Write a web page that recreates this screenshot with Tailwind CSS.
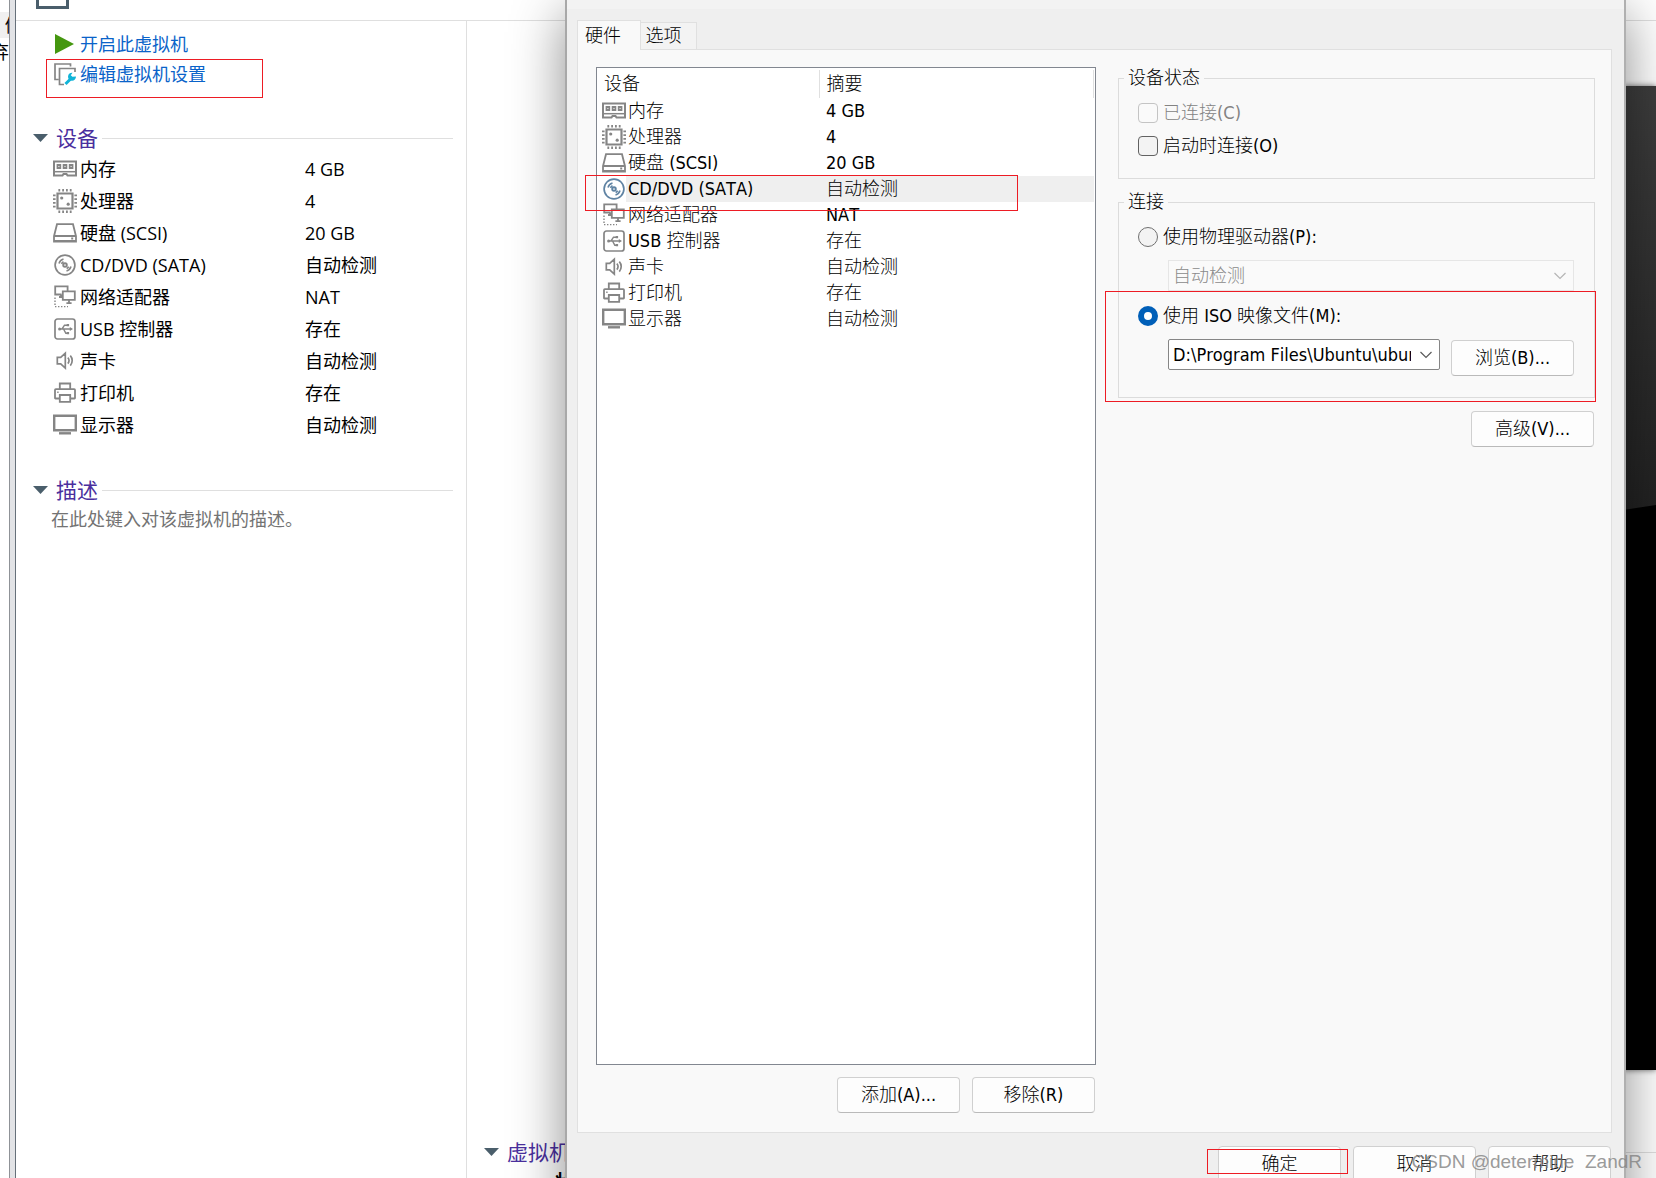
<!DOCTYPE html>
<html lang="zh-CN">
<head>
<meta charset="utf-8">
<title>虚拟机设置</title>
<script src="https://cdn.jsdelivr.net/npm/@tailwindcss/browser@4"></script>
</head>
<body class="bg-white">
<!-- shared device icons -->
<svg class="hidden" aria-hidden="true">
  <symbol id="i-mem" viewBox="0 0 24 24" fill="none" stroke="currentColor">
    <path stroke-width="2" d="M1 4.5h22v14H14.500l-1-1.500h-3l-1 1.500H1z"/><path stroke-width="1.500" d="M1 14.700h22"/><path stroke-width="1.800" d="M4.500 8h2.800v3H4.500zM10.600 8h2.800v3h-2.800zM16.700 8h2.800v3h-2.800z"/>
  </symbol>
  <symbol id="i-cpu" viewBox="0 0 24 24" fill="none" stroke="currentColor">
    <path stroke-width="2.200" d="M4.500 4.500h15v15h-15z"/><path stroke-width="2.600" stroke-dasharray="1.800 2" d="M5.400 1.300h13.500M5.400 22.700h13.500M1.300 5.400v13.500M22.700 5.400v13.500"/><circle cx="8.700" cy="9" r="1.600" fill="currentColor" stroke="none"/><circle cx="15.200" cy="15.200" r="1.600" fill="currentColor" stroke="none"/>
  </symbol>
  <symbol id="i-hdd" viewBox="0 0 24 24" fill="none" stroke="currentColor">
    <path stroke-width="1.800" d="M4 3.200h16l3 12v5.500H1v-5.500zM1 15h22"/><path stroke-width="2" d="M1 20h22M18.200 17.500h2"/>
  </symbol>
  <symbol id="i-cd" viewBox="0 0 24 24" fill="none" stroke="currentColor">
    <circle cx="12" cy="12" r="9.900" stroke-width="1.700"/><circle cx="12" cy="12" r="1.800" stroke-width="1.900"/><path stroke-width="1.600" d="M6 10.500a6.400 6.400 0 0 1 4.500-4.500M8.500 10.800a4 4 0 0 1 2-2M18 13.500a6.400 6.400 0 0 1-4.500 4.500M15.600 13.600a4 4 0 0 1-2 2"/>
  </symbol>
  <symbol id="i-net" viewBox="0 0 24 24" fill="none" stroke="currentColor">
    <path stroke-width="1.800" d="M8.500 9.500H2.200V1.400h12.400v4M9.800 6.400h12v8.400h-12zM16 15v3M13.400 18.200h5.200M6 12h3.500M8 9.500V12"/><path stroke-width="1.400" stroke-dasharray="1.400 1.600" d="M2 12.500v9M2 21.600h13"/>
  </symbol>
  <symbol id="i-usb" viewBox="0 0 24 24" fill="none" stroke="currentColor">
    <rect x="2" y="2" width="20" height="20" rx="2.500" stroke-width="1.700"/><path stroke-width="1.400" d="M6 12h12M9 12l2.500-3.800h3M10.500 12l2.300 4.200h2"/><circle cx="6.600" cy="12" r="1.500" fill="currentColor" stroke="none"/><path fill="currentColor" stroke="none" d="M16.800 10l3.200 2-3.200 2zM13.700 7h2.400v2.300h-2.400zM13.700 15h2.400v2.300h-2.400z"/>
  </symbol>
  <symbol id="i-snd" viewBox="0 0 24 24" fill="none" stroke="currentColor">
    <path stroke-width="1.700" d="M4.300 8.300h3.400l4.600-4.200v15l-4.600-4.200H4.300zM14.800 8.600a4.200 4.200 0 0 1 0 6M17.300 6.600a7.500 7.500 0 0 1 0 10"/>
  </symbol>
  <symbol id="i-prn" viewBox="0 0 24 24" fill="none" stroke="currentColor">
    <path stroke-width="1.800" d="M6.800 8V2.500h10.400V8M6.500 17.500H2.500q-.5 0-.5-.5V9q0-.8.800-.8h18.400q.8 0 .8.800v8q0 .5-.5.500h-4M6.800 14h10.400v6.800H6.800z"/><path stroke-width="1.400" d="M4.200 11.300h1.400"/>
  </symbol>
  <symbol id="i-dsp" viewBox="0 0 24 24" fill="none" stroke="currentColor">
    <path stroke-width="2.400" d="M1.200 2.700h21.600v14.600H1.200z"/><path stroke-width="2.400" d="M6 20.300h12"/>
  </symbol>
</svg>

<div class="relative flex h-screen overflow-hidden bg-white font-['Open_Sans','Noto_Sans_CJK_SC',sans-serif] text-lg text-black [font-kerning:none]">
  <!-- edge of the library pane -->
  <div class="flex w-4 shrink-0">
    <div class="flex w-[9px] flex-col overflow-hidden pt-3">
      <div class="flex h-[26px] justify-end overflow-hidden bg-[#f0f0f0] leading-[26px]"><span class="w-1 shrink-0 overflow-hidden">倒</span></div>
      <div class="flex h-7 justify-end overflow-hidden leading-7"><span>弃</span></div>
    </div>
    <div class="flex-1 border-r border-l border-l-[#8f9297] border-r-[#66707a] bg-[#e2e3e6]"></div>
  </div>

  <div class="flex min-w-0 flex-1 flex-col">
    <header class="flex h-[21px] shrink-0 border-b border-[#dfdfdf] pl-5">
      <div class="h-[9px] w-[33px] border-3 border-t-0 border-[#4a5e6b]"></div>
    </header>
    <div class="flex min-h-0 flex-1">
      <aside class="w-[451px] shrink-0 border-r border-[#dfdfdf] pt-2 pr-[13px]">
        <nav class="flex flex-col items-start pl-[30px] text-[#0a63c9]">
          <a href="#" class="flex h-[30px] items-center gap-[5px] pl-[9px]">
            <svg class="size-5" viewBox="0 0 20 20"><path fill="#45970f" d="M0 0l19 10L0 20z"/></svg>
            <span>开启此虚拟机</span></a>
          <a href="#" class="flex h-[39px] w-[217px] items-start gap-[3px] border border-[#ed1c24] pl-[7px] leading-7">
            <svg class="mt-[3px] size-[23px]" viewBox="0 0 23 23" fill="none"><path stroke="#858585" stroke-width="1.700" d="M4.500 16.500H1V1h15.500v2.500M21 9V5.500H5.500v16H10"/><path stroke="#10b4d8" stroke-width="3" d="M11.500 21l6-6"/><path fill="#10b4d8" d="M22 13.500a4 4 0 1 1-3.500-3.800l-1.700 2.500 1.600 1.600z"/></svg>
            编辑虚拟机设置</a>
        </nav>

        <section class="pt-6">
          <h2 class="flex h-8 items-center pl-[17px] text-[21px] text-[#4a2f9e]">
            <svg class="mr-2 h-2 w-[15px]" viewBox="0 0 15 8"><path fill="#4a5e6b" d="M0 0h15L7.500 8z"/></svg>设备<span class="ml-1 h-px flex-1 bg-[#dfdfdf]"></span></h2>
          <table class="w-full"><tbody id="summary"></tbody></table>
        </section>
        <section class="pt-8">
          <h2 class="flex h-8 items-center pl-[17px] text-[21px] text-[#4a2f9e]">
            <svg class="mr-2 h-2 w-[15px]" viewBox="0 0 15 8"><path fill="#4a5e6b" d="M0 0h15L7.500 8z"/></svg>描述<span class="ml-1 h-px flex-1 bg-[#dfdfdf]"></span></h2>
          <p class="pl-[35px] leading-[26px] text-[#737373]">在此处键入对该虚拟机的描述。</p>
        </section>
      </aside>

      <main class="flex min-w-0 flex-1 flex-col justify-end">
        <section class="h-[43px] shrink-0 overflow-hidden">
          <h2 class="flex h-[34px] items-center pl-[17px] text-[21px] text-[#4a2f9e]">
            <svg class="mr-2 h-2 w-[15px] shrink-0" viewBox="0 0 15 8"><path fill="#4a5e6b" d="M0 0h15L7.500 8z"/></svg>虚拟机详细信息<span class="ml-1 h-px flex-1 bg-[#dfdfdf]"></span></h2>
          <p class="pl-[88px] leading-6 font-bold">状态：</p>
        </section>
      </main>
    </div>
  </div>

  <!-- console preview behind the dialog -->
  <div class="absolute top-[86px] right-0 bottom-[108px] w-[33px] shadow-[0_0_6px_rgba(0,0,0,0.6)]">
    <svg class="size-full" viewBox="0 0 33 984" preserveAspectRatio="none"><defs><linearGradient id="g" x1="0" y1="0" x2="0" y2="1"><stop stop-color="#3d3d3d"/><stop offset="1" stop-color="#222"/></linearGradient></defs><path fill="#000" d="M0 0h33v984H0z"/><path fill="url(#g)" d="M0 0h33v419L0 424z"/></svg>
  </div>

  <!-- settings dialog -->
  <div role="dialog" aria-label="虚拟机设置" class="absolute -top-4 right-[30px] -bottom-8 left-[565px] flex flex-col border-r-2 border-l-2 border-l-[#a8a8a8] border-r-[#a0a0a0]/80 bg-[#efefef] pt-4 font-['DejaVu_Sans_Condensed','Noto_Sans_CJK_SC',sans-serif] font-light shadow-[0_30px_50px_rgba(0,0,0,0.45)]">
    <div class="h-[9px] shrink-0 bg-[#f3f3f3]"></div>
    <div class="z-10 -mb-px flex h-[41px] shrink-0 items-end pl-2.5" role="tablist">
      <button role="tab" class="h-[30px] w-16 border border-b-0 border-[#e0e0e0] bg-[#f9f9f9] pr-3 leading-7">硬件</button>
      <button role="tab" class="mb-px h-[27px] w-14 border border-b-0 border-l-0 border-[#e0e0e0] bg-[#f3f3f3] pr-2.5 leading-6">选项</button>
    </div>
    <div class="mr-3 ml-2.5 flex min-h-0 flex-1 border border-[#e0e0e0] bg-[#f9f9f9] pt-[17px] pr-4 pl-[18px]">
      <div class="flex w-[500px] shrink-0 flex-col">
        <div class="relative min-h-0 flex-1 border border-[#828790] bg-white px-px pt-0.5">
          <table class="w-full table-fixed">
            <thead><tr class="h-7 text-left"><th class="w-[221px] border-r border-[#e0e0e0] pl-1.5 font-light">设备</th><th class="border-r border-[#e0e0e0] pl-[7px] font-light">摘要</th></tr></thead>
            <tbody id="hardware"></tbody>
          </table>
          <div class="pointer-events-none absolute top-[107px] -left-3 h-9 w-[433px] border border-[#ed1c24]"></div>
        </div>
        <div class="flex h-[67px] shrink-0 items-start justify-end gap-3 pt-3 pr-px">
          <button class="h-9 w-[123px] rounded border border-[#d0d0d0] border-b-[#bababa] bg-[#fdfdfd]">添加(A)...</button>
          <button class="h-9 w-[123px] rounded border border-[#d0d0d0] border-b-[#bababa] bg-[#fdfdfd]">移除(R)</button>
        </div>
      </div>

      <div class="ml-[22px] flex min-w-0 flex-1 flex-col">
        <fieldset class="h-28 border border-[#dcdcdc] pt-[7px] pl-[19px]">
          <legend class="-ml-3.5 px-1 leading-[22px]">设备状态</legend>
          <label class="flex h-[33px] items-center gap-[5px] text-[#838383]"><input type="checkbox" disabled class="size-5 appearance-none rounded border border-[#c4c4c4] bg-[#fafafa]">已连接(C)</label>
          <label class="flex h-[33px] items-center gap-[5px]"><input type="checkbox" class="size-5 appearance-none rounded border border-[#626262] bg-[#f3f3f3]">启动时连接(O)</label>
        </fieldset>
        <div class="relative mt-3">
          <fieldset class="h-[207px] border border-[#dcdcdc] pt-[7px] pr-5 pl-[19px]">
            <legend class="-ml-3.5 px-1 leading-[22px]">连接</legend>
            <label class="flex h-[33px] items-center gap-[5px]"><input type="radio" name="src" class="size-5 appearance-none rounded-full border border-[#707070] bg-[#f3f3f3]">使用物理驱动器(P):</label>
            <div class="relative mt-[7px] ml-[30px]">
              <select disabled aria-label="物理驱动器" class="block h-[31px] w-full appearance-none border border-[#e6e6e6] bg-[#fafafa] pl-1 text-[#8a8a8a] opacity-100"><option>自动检测</option></select>
              <svg class="pointer-events-none absolute top-3 right-2 h-2 w-3" viewBox="0 0 12 8" fill="none" stroke="#b5b5b5" stroke-width="1.200"><path d="M.5 1l5.500 5.500L11.500 1"/></svg>
            </div>
            <label class="mt-2 flex h-[33px] items-center gap-[5px]"><input type="radio" name="src" checked class="size-5 appearance-none rounded-full border-[6px] border-[#005fb8] bg-white">使用 ISO 映像文件(M):</label>
            <div class="mt-[7px] ml-[30px] flex items-start gap-[11px]">
              <div class="relative min-w-0 flex-1">
                <input type="text" aria-label="ISO 映像文件" value="D:\Program Files\Ubuntu\ubuntu-20.04.iso" class="block h-[31px] w-full rounded-xs border border-[#868686] bg-white pr-7 pl-1">
                <svg class="pointer-events-none absolute top-3 right-2 h-2 w-3" viewBox="0 0 12 8" fill="none" stroke="#5a5a5a" stroke-width="1.200"><path d="M.5 1l5.500 5.500L11.500 1"/></svg>
              </div>
              <button class="mt-px h-9 w-[123px] rounded border border-[#d0d0d0] border-b-[#bababa] bg-[#fdfdfd]">浏览(B)...</button>
            </div>
          </fieldset>
          <div class="pointer-events-none absolute -right-px -bottom-1 -left-[13px] h-[111px] border border-[#ed1c24]"></div>
        </div>
        <button class="mt-[13px] mr-px h-9 w-[123px] self-end rounded border border-[#d0d0d0] border-b-[#bababa] bg-[#fdfdfd]">高级(V)...</button>
      </div>
    </div>
    <footer class="flex h-[77px] shrink-0 items-start justify-end gap-3 pt-[13px] pr-[13px]">
      <div class="relative">
        <button class="h-9 w-[123px] rounded border border-[#d0d0d0] bg-[#fdfdfd]">确定</button>
        <div class="pointer-events-none absolute top-[3px] -right-[7px] -left-[11px] h-[25px] border border-[#ed1c24]"></div>
      </div>
      <button class="h-9 w-[123px] rounded border border-[#d0d0d0] bg-[#fdfdfd]">取消</button>
      <button class="h-9 w-[123px] rounded border border-[#d0d0d0] bg-[#fdfdfd]">帮助</button>
    </footer>
  </div>
  <div class="pointer-events-none absolute right-3.5 bottom-1 font-['Liberation_Sans',sans-serif] text-[19px] leading-6 whitespace-pre text-[#808080]/80">CSDN @determine  ZandR</div>
</div>

<script>
  const devices = [
    ['mem', '内存', '4 GB'], ['cpu', '处理器', '4'], ['hdd', '硬盘 (SCSI)', '20 GB'],
    ['cd', 'CD/DVD (SATA)', '自动检测'], ['net', '网络适配器', 'NAT'], ['usb', 'USB 控制器', '存在'],
    ['snd', '声卡', '自动检测'], ['prn', '打印机', '存在'], ['dsp', '显示器', '自动检测']
  ];
  document.getElementById('summary').innerHTML = devices.map(([icon, name, value]) =>
    `<tr class="h-8 leading-[30px]"><td class="w-[289px] py-0 pl-[37px] align-top"><div class="flex h-[30px] items-center gap-[3px]"><svg class="size-6 text-[#858585]"><use href="#i-${icon}"/></svg>${name}</div></td><td class="py-0 align-top">${value}</td></tr>`).join('');
  document.getElementById('hardware').innerHTML = devices.map(([icon, name, value]) => {
    const on = icon === 'cd';
    return `<tr class="h-[26px] leading-[26px]"><td class="p-0"><div class="flex h-[26px] items-center pl-1"><svg class="size-6 shrink-0 ${on ? 'text-[#5f83a3]' : 'text-[#858585]'}"><use href="#i-${icon}"/></svg><span class="flex-1 pl-0.5 ${on ? 'bg-[#efefef]' : ''}">${name}</span></div></td><td class="py-0 pl-[7px] ${on ? 'bg-[#efefef]' : ''}">${value}</td></tr>`;
  }).join('');
</script>
</body>
</html>
